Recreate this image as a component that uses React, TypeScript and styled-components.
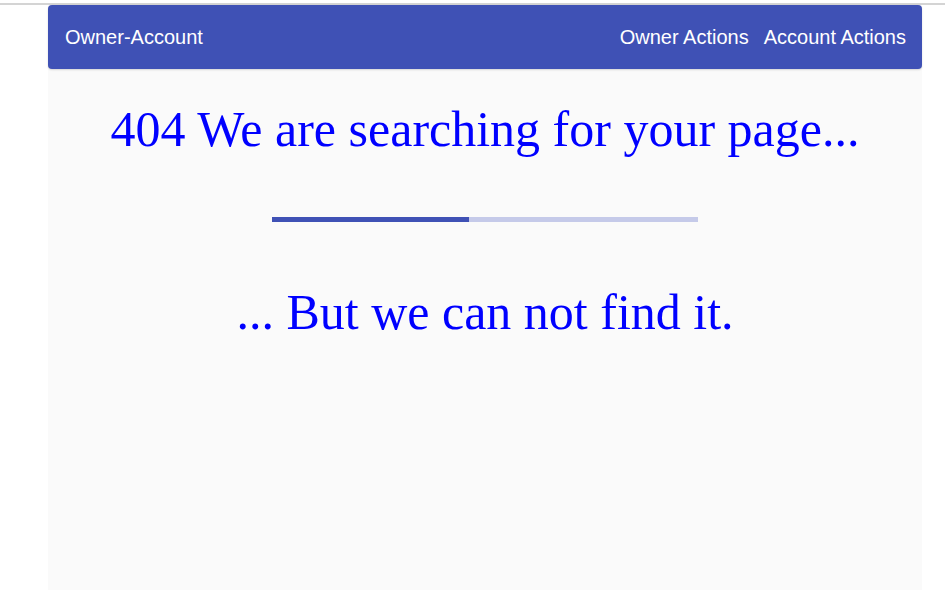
import React from "react";
import styled, { createGlobalStyle } from "styled-components";

const Global = createGlobalStyle`
  html, body { margin: 0; padding: 0; background: #ffffff; }
  body { font-family: "Liberation Sans", Arial, sans-serif; }
`;

const Page = styled.div`
  height: 590px;
  display: flex;
  flex-direction: column;
  padding-top: 3px;
  box-sizing: border-box;
`;

const TopRule = styled.div`
  height: 2px;
  background: #d4d4d4;
  flex: none;
`;

const Frame = styled.div`
  flex: 1;
  margin: 0 23px 0 48px;
  display: flex;
  flex-direction: column;
  background: #fafafa;
`;

const AppBar = styled.header`
  height: 64px;
  flex: none;
  background: #3f51b5;
  border-radius: 4px;
  display: flex;
  align-items: center;
  justify-content: space-between;
  padding: 0 16px 0 17px;
  color: #ffffff;
  font-size: 20px;
  box-shadow: 0 1px 2px rgba(0,0,0,0.15);
`;

const Brand = styled.span``;

const Nav = styled.nav`
  display: flex;
  gap: 15px;
`;

const NavLink = styled.span``;

const Content = styled.main`
  flex: 1;
  display: flex;
  flex-direction: column;
  align-items: center;
  font-family: "Liberation Serif", "Times New Roman", serif;
  color: #0000ff;
`;

const Title = styled.h1<{ $top: number }>`
  margin: ${(p) => p.$top}px 0 0 0;
  font-weight: 400;
  font-size: 50px;
  line-height: 56px;
`;

const Track = styled.div`
  width: 426px;
  height: 5px;
  margin-top: 60px;
  background: #c5cae9;
  display: flex;
`;

const Fill = styled.div`
  height: 100%;
  background: #3f51b5;
`;

export default function App() {
  const progress = 0.4625;
  return (
    <>
      <Global />
      <Page>
        <TopRule />
        <Frame>
          <AppBar>
            <Brand>Owner-Account</Brand>
            <Nav>
              <NavLink>Owner Actions</NavLink>
              <NavLink>Account Actions</NavLink>
            </Nav>
          </AppBar>
          <Content>
            <Title $top={32}>404 We are searching for your page...</Title>
            <Track>
              <Fill style={{ width: `${progress * 100}%` }} />
            </Track>
            <Title $top={62}>... But we can not find it.</Title>
          </Content>
        </Frame>
      </Page>
    </>
  );
}
